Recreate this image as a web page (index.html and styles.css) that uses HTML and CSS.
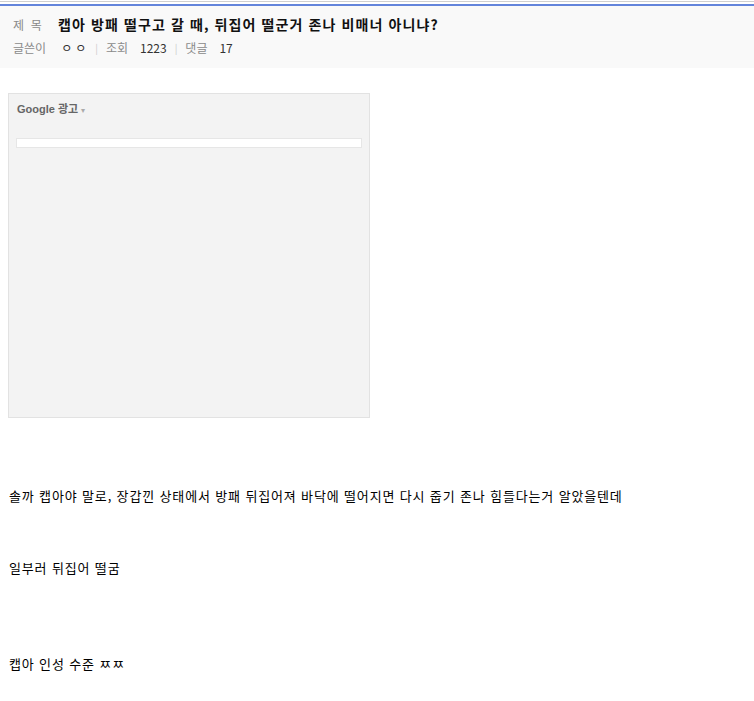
FILE: index.html
```html
<!DOCTYPE html>
<html lang="ko">
<head>
<meta charset="utf-8">
<link rel="stylesheet" href="styles.css">
</head>
<body>
<div class="rule-grey"></div>
<div class="rule-blue"></div>
<div class="post-head">
  <div class="title-row">
    <span class="label">제&nbsp;&nbsp;목</span>
    <span class="title">캡아 방패 떨구고 갈 때, 뒤집어 떨군거 존나 비매너 아니냐?</span>
  </div>
  <div class="meta-row">
    <span class="label">글쓴이</span>
    <span class="val nick">ㅇㅇ</span>
    <span class="sep">|</span>
    <span class="label">조회</span>
    <span class="val">1223</span>
    <span class="sep">|</span>
    <span class="label">댓글</span>
    <span class="val">17</span>
  </div>
</div>
<div class="ad">
  <div class="ad-label">Google 광고 <span class="caret">▾</span></div>
  <div class="ad-bar"></div>
</div>
<div class="content">
  <p>솔까 캡아야 말로, 장갑낀 상태에서 방패 뒤집어져 바닥에 떨어지면 다시 줍기 존나 힘들다는거 알았을텐데</p>
  <p class="gap3">일부러 뒤집어 떨굼</p>
  <p class="gap4">캡아 인성 수준 ㅉㅉ</p>
</div>
</body>
</html>
```
FILE: styles.css
```css
html, body {
  margin: 0;
  padding: 0;
  background: #fff;
  font-family: "Noto Sans CJK KR", "Noto Sans", sans-serif;
  color: #222;
}
.rule-grey {
  margin-top: 1px;
  height: 1px;
  background: #cfcfcf;
}
.rule-blue {
  margin-top: 2px;
  height: 2px;
  background: #6384db;
}
.post-head {
  background: #f9f9f9;
  padding: 8px 0 11px 13px;
}
.title-row, .meta-row {
  display: flex;
  align-items: center;
  height: 20px;
}
.meta-row {
  margin-top: 3px;
}
.label {
  font-size: 12px;
  color: #8a8a8a;
}
.title-row .label {
  width: 45px;
}
.title {
  font-size: 14px;
  font-weight: bold;
  color: #111;
  letter-spacing: 1.1px;
}
.val {
  font-size: 12px;
  color: #333;
  margin-left: 12px;
}
.nick {
  margin-left: 15px;
  margin-right: -2px;
  letter-spacing: 3px;
}
.sep {
  font-size: 10px;
  color: #ccc;
  margin: 0 8px;
}
.ad {
  margin: 25px 0 0 8px;
  width: 360px;
  height: 323px;
  border: 1px solid #e2e2e2;
  background: #f3f3f3;
  box-sizing: content-box;
}
.ad-label {
  font-family: "Liberation Sans", "Noto Sans CJK KR", sans-serif;
  font-size: 11px;
  font-weight: bold;
  color: #666;
  padding: 8px 0 0 8px;
  line-height: 14px;
}
.caret {
  font-size: 8px;
  color: #aaa;
  font-weight: normal;
}
.ad-bar {
  margin: 20px 0 0 7px;
  width: 344px;
  height: 8px;
  background: #fff;
  border: 1px solid #e6e6e6;
}
.content {
  padding: 66px 0 0 9px;
  font-size: 13px;
  line-height: 24px;
  color: #000;
  letter-spacing: 0.85px;
}
.content p {
  margin: 0;
}
.content .gap3 {
  margin-top: 48px;
}
.content .gap4 {
  margin-top: 72px;
}
```
